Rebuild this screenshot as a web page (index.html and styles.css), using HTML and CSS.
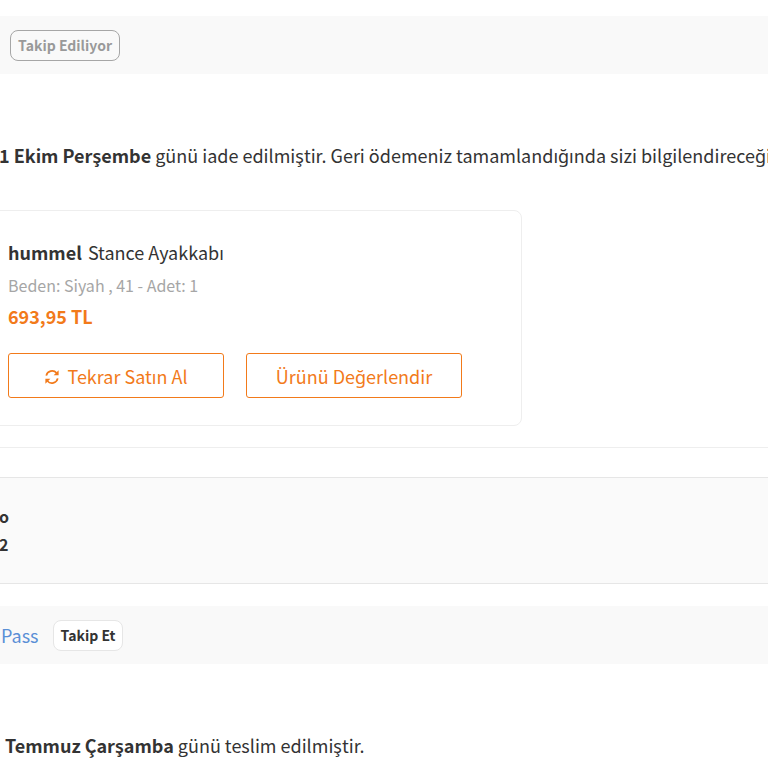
FILE: index.html
```html
<!DOCTYPE html>
<html lang="tr">
<head>
<meta charset="utf-8">
<title>Siparişlerim</title>
<link rel="stylesheet" href="styles.css">
</head>
<body>
<main class="page">
  <section class="bar bar-first">
    <button class="follow follow-muted">Takip Ediliyor</button>
  </section>
  <p class="status status-first"><b>1 Ekim Perşembe</b> günü iade edilmiştir. Geri ödemeniz tamamlandığında sizi bilgilendireceğiz.</p>
  <div class="shipment">
    <article class="card">
      <h3 class="title"><b>hummel</b> <span>Stance Ayakkabı</span></h3>
      <p class="meta">Beden: Siyah , 41 - Adet: 1</p>
      <p class="price">693,95 TL</p>
      <div class="actions">
        <a class="action">
          <svg class="icon" viewBox="0 0 16 16" width="16" height="16" aria-hidden="true">
            <path d="M2.3 6.6A5.9 5.9 0 0 1 12.6 4" fill="none" stroke="currentColor" stroke-width="1.7"/>
            <path d="M14.6 1.2v5h-5z" fill="currentColor"/>
            <path d="M13.7 9.4A5.9 5.9 0 0 1 3.4 12" fill="none" stroke="currentColor" stroke-width="1.7"/>
            <path d="M1.4 14.8v-5h5z" fill="currentColor"/>
          </svg>
          Tekrar Satın Al
        </a>
        <a class="action">Ürünü Değerlendir</a>
      </div>
    </article>
  </div>
  <section class="info">
    <p class="info-line">o</p>
    <p class="info-line">2</p>
  </section>
  <section class="bar bar-second">
    <a class="pass">Pass</a>
    <button class="follow">Takip Et</button>
  </section>
  <p class="status status-second"><b>Temmuz Çarşamba</b> günü teslim edilmiştir.</p>
</main>
</body>
</html>
```
FILE: styles.css
```css
html, body {
  margin: 0;
  padding: 0;
  background: #fff;
  overflow: hidden;
}
.page {
  width: 768px;
  height: 768px;
  overflow: hidden;
  font-family: "Noto Sans CJK SC", "Noto Sans", sans-serif;
  color: #333;
  padding-top: 16px;
  box-sizing: border-box;
}
p, h3 { margin: 0; }
.bar {
  height: 58px;
  background: #f9f9f9;
  display: flex;
  align-items: center;
}
.bar-first { padding-left: 10px; }
.bar-second {
  margin-top: 22px;
  gap: 14px;
}
.follow {
  font: 600 14px/20px "Noto Sans CJK SC", "Noto Sans", sans-serif;
  height: 31px;
  padding: 0 7px;
  border-radius: 8px;
  border: 1px solid #e6e6e6;
  background: #fff;
  color: #333;
}
.follow-muted {
  background: #f9f9f9;
  border-color: #a6a6a6;
  color: #999;
}
.status {
  font-size: 18px;
  line-height: 24px;
  white-space: nowrap;
}
.status b { font-weight: 600; }
.status-first {
  margin-top: 69px;
  margin-left: -1px;
}
.status-second {
  margin-top: 69px;
  margin-left: 5px;
}
.shipment {
  margin-top: 43px;
  border-bottom: 1px solid #eee;
  padding-bottom: 21px;
}
.card {
  width: 532px;
  height: 216px;
  margin-left: -10px;
  box-sizing: border-box;
  padding: 27px 0 0 17px;
  border: 1px solid #eee;
  border-radius: 8px;
  background: #fff;
}
.title {
  font-size: 18px;
  line-height: 28px;
  font-weight: 400;
}
.title b { font-weight: 600; margin-right: 2px; }
.meta {
  margin-top: 9px;
  font-size: 16px;
  line-height: 20px;
  color: #a6a6a6;
}
.price {
  margin-top: 9px;
  font-size: 18px;
  line-height: 24px;
  font-weight: 600;
  color: #f27a1a;
}
.actions {
  margin-top: 25px;
  display: flex;
  gap: 22px;
}
.action {
  box-sizing: border-box;
  width: 216px;
  height: 45px;
  display: flex;
  align-items: center;
  justify-content: center;
  gap: 7px;
  border: 1px solid #f27a1a;
  border-radius: 3px;
  color: #f27a1a;
  font-size: 18px;
  line-height: 24px;
}
.icon { flex: none; margin-top: 2px; }
.info {
  margin-top: 29px;
  height: 107px;
  box-sizing: border-box;
  padding-top: 24px;
  background: #fafafa;
  border-top: 1px solid #e6e6e6;
  border-bottom: 1px solid #e6e6e6;
}
.info-line {
  font-size: 16px;
  line-height: 28px;
  font-weight: 600;
  margin-left: -1px;
}
.pass {
  color: #5a8fd6;
  font-size: 18px;
  line-height: 24px;
  margin-left: 1px;
}
```
